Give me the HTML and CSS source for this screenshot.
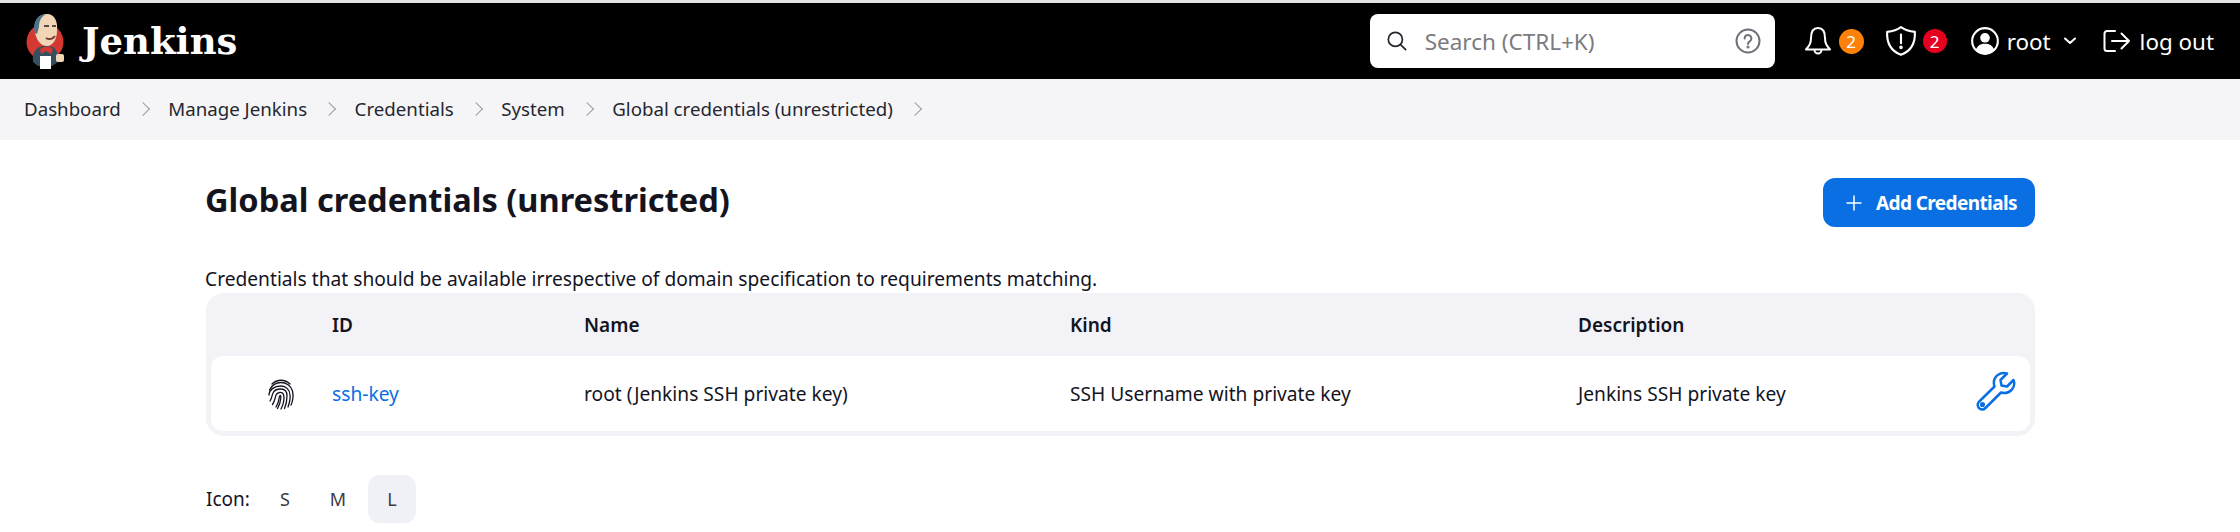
FILE: index.html
```html
<!DOCTYPE html>
<html lang="en">
<head>
  <meta charset="UTF-8">
  <title>Global credentials (unrestricted) - Jenkins</title>
  <link rel="stylesheet" href="styles.css">
</head>
<body>
  <header class="top-bar">
    <a class="brand" href="#">
      <svg class="brand-logo" viewBox="0 0 44 56" width="44" height="56">
        <circle cx="21" cy="29" r="18.500" fill="#d33833"/>
        <path d="M9 49 C8 39 12 34 20 33 L29 34 C33 37 35 43 34 49 L28 53 L14 53 Z" fill="#335061"/>
        <path d="M11 19 C9 7 15 1 23 1 C31 1 34 9 33 18 C33 26 29 33 23 33 C17 33 12 27 11 19 Z" fill="#f0d6b7"/>
        <path d="M11 20 C8 10 13 2 22 1 C17 4 15 8 15 14 L13 21 Z" fill="#49728b"/>
        <path d="M20 34 L16 36 L17 41 L22 38 L27 41 L29 36 L25 34 Z" fill="#d33833"/>
        <path d="M20 13 l5 0 M28 13 l4 0" stroke="#231f20" stroke-width="1.500" fill="none"/>
        <path d="M22 25 C25 27 29 26 31 23" stroke="#7a3b2e" stroke-width="2" fill="none"/>
        <rect x="16" y="43" width="11" height="13" fill="#fff"/>
        <rect x="32" y="41" width="8" height="8" rx="2" fill="#f0d6b7"/>
      </svg>
      <span class="brand-name">Jenkins</span>
    </a>
    <div class="search-box">
      <svg class="icon search-icon" viewBox="0 0 24 24" width="26" height="26">
        <circle cx="10.500" cy="10.500" r="6.500"/><path d="M15.500 15.500 L20 20"/>
      </svg>
      <span class="search-text">Search (CTRL+K)</span>
      <svg class="icon help-icon" viewBox="0 0 26 26" width="26" height="26">
        <circle cx="13" cy="13" r="11.500"/>
        <path d="M9.600 10.400 a3.400 3.400 0 1 1 5.400 2.700 c-1.300 .9 -2 1.500 -2 3"/>
        <circle class="dot" cx="13" cy="19" r="0.600"/>
      </svg>
    </div>
    <nav class="top-nav">
      <svg class="icon bell-icon" viewBox="0 0 28 30" width="28" height="30">
        <path d="M14 2 C8.500 2 7 7 7 12 C7 18 5 20 2 23.500 H26 C23 20 21 18 21 12 C21 7 19.500 2 14 2 Z"/>
        <path d="M10.500 24 a3.500 3.500 0 0 0 7 0"/>
      </svg>
      <span class="badge badge-orange">2</span>
      <svg class="icon shield-icon" viewBox="0 0 30 30" width="32" height="32">
        <path d="M15 2 C19 5 23 6 28 6.500 C28.500 17 24 24.500 15 28 C6 24.500 1.500 17 2 6.500 C7 6 11 5 15 2 Z"/>
        <path d="M15 9 V17"/><circle class="dot" cx="15" cy="21" r="0.700"/>
      </svg>
      <span class="badge badge-red">2</span>
      <svg class="icon user-icon" viewBox="0 0 28 28" width="30" height="30">
        <circle cx="14" cy="14" r="12"/>
        <circle class="fill" cx="14" cy="11" r="4.500"/>
        <path class="fill" d="M5.500 22 C7 18 10 16.500 14 16.500 C18 16.500 21 18 22.500 22 C20 25 17 26 14 26 C11 26 8 25 5.500 22 Z"/>
      </svg>
      <span class="user-name">root</span>
      <svg class="icon chevron-down" viewBox="0 0 12 8" width="12" height="8"><path d="M1 1.500 L6 6 L11 1.500"/></svg>
      <svg class="icon logout-icon" viewBox="0 0 28 24" width="28" height="24">
        <path d="M12 2 H4 a2.500 2.500 0 0 0 -2.500 2.500 V19.500 A2.500 2.500 0 0 0 4 22 H12"/>
        <path d="M9 12 H26 M18.500 4.500 L26 12 L18.500 19.500"/>
      </svg>
      <span class="logout-text">log out</span>
    </nav>
  </header>

  <div class="breadcrumb-bar">
    <a href="#">Dashboard</a><span class="sep"></span>
    <a href="#">Manage Jenkins</a><span class="sep"></span>
    <a href="#">Credentials</a><span class="sep"></span>
    <a href="#">System</a><span class="sep"></span>
    <a href="#">Global credentials (unrestricted)</a><span class="sep"></span>
  </div>

  <main class="content">
    <div class="title-row">
      <h1>Global credentials (unrestricted)</h1>
      <button class="add-btn">
        <svg class="icon" viewBox="0 0 16 16" width="16" height="16"><path d="M8 1 V15 M1 8 H15"/></svg>
        Add Credentials
      </button>
    </div>
    <p class="intro">Credentials that should be available irrespective of domain specification to requirements matching.</p>

    <div class="cred-table">
      <div class="cred-row cred-head">
        <span></span>
        <span>ID</span>
        <span>Name</span>
        <span>Kind</span>
        <span>Description</span>
        <span></span>
      </div>
      <div class="cred-row cred-body">
        <svg class="finger" viewBox="0 0 28 32" width="28" height="32">
          <path d="M5 6 C10 1 18 1 23 6"/>
          <path d="M2.500 12 C5 7 9 4.500 14 4.500 C19 4.500 24 7.500 25.500 13 C26.500 18 26 23 24 27"/>
          <path d="M2 17 C2 12 7 8 14 8 C19 8 23 12 23 17 C23.500 21 22.500 25 21 29"/>
          <path d="M3 23 C5 20 5 17 6 15 C7 12.500 10 11 14 11 C18 11 20 14 20 18 C20 22 19.500 26 17.500 30.500"/>
          <path d="M5.500 26.500 C8 23 8 20 9 17 C10 14.500 15 13 16.500 16.500 C17.500 20 16.500 26 14 31"/>
          <path d="M9 29 C11 26 12 22 12.500 18.500 C13.500 16.500 14 18 13.800 20 C13.500 24 12 28 10.500 30.500"/>
        </svg>
        <a class="cred-id" href="#">ssh-key</a>
        <span>root (Jenkins SSH private key)</span>
        <span>SSH Username with private key</span>
        <span>Jenkins SSH private key</span>
        <svg class="wrench" viewBox="0 0 40 40" width="40" height="40">
          <path d="M37.500 9 L31 15.500 L25.500 14.500 L24.500 9 L31 2.500 C26 1 20.500 3 18.500 8 C17.500 11 17.800 13.500 18.500 15.500 L2.800 31 C1 33 1.500 36 3.500 37.500 C5.500 39 8 38.500 9.500 37 L25 21.500 C28.500 22.500 32.500 22 35.500 19 C38 16.500 38.800 12.500 37.500 9 Z"/>
          <circle cx="6.500" cy="33.500" r="1.300"/>
        </svg>
      </div>
    </div>

    <div class="icon-size">
      <span class="icon-size-label">Icon:</span>
      <span class="size-opt">S</span>
      <span class="size-opt">M</span>
      <span class="size-opt size-active">L</span>
    </div>
  </main>
</body>
</html>
```

FILE: styles.css
```css
* {
  margin: 0;
  padding: 0;
  box-sizing: border-box;
}

body {
  background: #fff;
  color: #14141f;
  font-family: "Noto Sans", "Open Sans", sans-serif;
  font-size: 19.200px;
  border-top: 3px solid #e4e4e6;
}

a {
  color: inherit;
  text-decoration: none;
}

.icon {
  fill: none;
  stroke: #fff;
  stroke-width: 2;
  stroke-linecap: round;
  stroke-linejoin: round;
  flex: none;
}

.icon .fill {
  fill: #fff;
  stroke: none;
}

.top-bar {
  display: flex;
  align-items: center;
  height: 76px;
  background: #000;
  padding-left: 24px;
}

.brand {
  display: flex;
  align-items: center;
  gap: 14px;
  color: #fff;
}

.brand-name {
  font-family: "DejaVu Serif", serif;
  font-weight: 700;
  font-size: 37px;
  line-height: 40px;
}

.search-box {
  display: flex;
  align-items: center;
  width: 405px;
  height: 54px;
  margin-left: auto;
  padding: 0 14px;
  background: #fff;
  border-radius: 8px;
}

.search-icon {
  stroke: #26262e;
  stroke-width: 1.600;
}

.search-text {
  flex: 1;
  margin-left: 15px;
  font-size: 22.500px;
  color: #7b7b80;
}

.help-icon {
  stroke: #6f6f7b;
}

.help-icon .dot {
  fill: #6f6f7b;
}

.top-nav {
  display: flex;
  align-items: center;
  margin-left: 29px;
  padding-right: 26px;
  color: #fff;
  font-size: 22.400px;
}

.top-nav .dot {
  fill: #fff;
}

.badge {
  display: flex;
  align-items: center;
  justify-content: center;
  width: 25px;
  height: 25px;
  border-radius: 50%;
  font-size: 17px;
}

.badge-orange {
  margin-left: 7px;
  background: #fe820a;
}

.badge-red {
  width: 24px;
  height: 24px;
  margin-left: 6px;
  background: #e6001f;
}

.shield-icon {
  margin-left: 21px;
}

.user-icon {
  margin-left: 23px;
}

.user-name {
  margin-left: 7px;
}

.chevron-down {
  margin-left: 13px;
}

.logout-icon {
  margin-left: 27px;
}

.logout-text {
  margin-left: 9px;
}

.breadcrumb-bar {
  display: flex;
  align-items: center;
  height: 61px;
  padding: 0 0 2px 24px;
  background: #f5f5f8;
  color: #26262e;
  font-size: 18.700px;
}

.sep {
  width: 10px;
  height: 10px;
  margin: 0 20.500px 0 17px;
  border-top: 1.500px solid #9a9aa2;
  border-right: 1.500px solid #9a9aa2;
  transform: rotate(45deg);
}

.content {
  padding: 38px 205px 0 206px;
}

.title-row {
  display: flex;
  align-items: center;
  justify-content: space-between;
}

h1 {
  margin-left: -1px;
  padding-bottom: 6px;
  font-size: 32.600px;
  line-height: 43px;
  font-weight: 700;
  color: #14141f;
}

.add-btn {
  display: flex;
  align-items: center;
  gap: 14px;
  width: 212px;
  height: 49px;
  padding-left: 23px;
  border: none;
  border-radius: 12px;
  background: #0b6fe4;
  color: #fff;
  font-family: inherit;
  font-size: 19px;
  font-weight: 700;
  letter-spacing: -0.600px;
}

.add-btn .icon {
  stroke-width: 1.500;
}

.intro {
  margin-top: 38px;
  margin-left: -1px;
  line-height: 28px;
}

.cred-table {
  padding: 0 5px 5px;
  background: #f2f2f7;
  border-radius: 18px;
}

.cred-row {
  display: grid;
  grid-template-columns: 121px 252px 486px 508px 1fr 60px;
  align-items: center;
}

.cred-head {
  height: 63px;
  font-size: 19px;
  font-weight: 600;
}

.cred-body {
  height: 75px;
  background: #fff;
  border-radius: 12px;
}

.finger {
  justify-self: center;
  margin-left: 19px;
  fill: none;
  stroke: #14141f;
  stroke-width: 1.300;
  stroke-linecap: round;
}

.cred-id {
  color: #0b6fe4;
}

.wrench {
  margin: 0 0 6px 6px;
  fill: none;
  stroke: #0b6fe4;
  stroke-width: 2.500;
  stroke-linejoin: round;
}

.icon-size {
  display: flex;
  align-items: center;
  margin-top: 39px;
  font-size: 19px;
}

.icon-size-label {
  margin-right: 11px;
}

.size-opt {
  display: flex;
  align-items: center;
  justify-content: center;
  width: 48px;
  height: 48px;
  margin-right: 5px;
  color: #3c3c44;
  font-size: 18px;
  border-radius: 12px;
}

.size-active {
  margin-left: 1px;
  background: #f0f0f7;
}
```
